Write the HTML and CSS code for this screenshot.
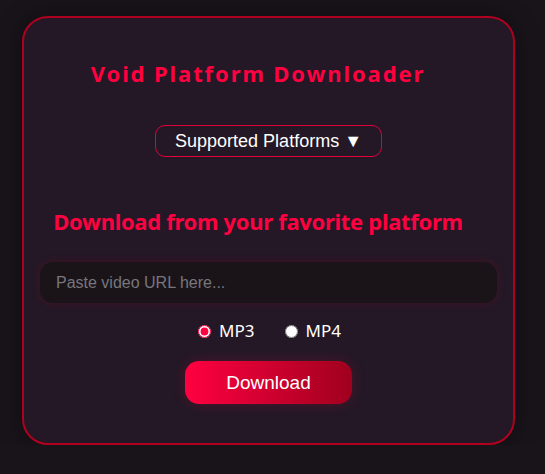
FILE: index.html
```html
<!DOCTYPE html>
<html lang="en">
<head>
<meta charset="utf-8">
<title>Void Platform Downloader</title>
<link rel="stylesheet" href="styles.css">
</head>
<body>
  <main class="card">
    <h1 class="title">Void Platform Downloader</h1>
    <button class="platforms-btn" type="button">Supported Platforms ▼</button>
    <h2 class="subtitle">Download from your favorite platform</h2>
    <input class="url-input" type="text" placeholder="Paste video URL here...">
    <div class="formats">
      <label class="format"><input type="radio" name="format" checked> MP3</label>
      <label class="format"><input type="radio" name="format"> MP4</label>
    </div>
    <button class="download-btn" type="button">Download</button>
  </main>
</body>
</html>
```

FILE: styles.css
```css
* { box-sizing: border-box; }

html, body {
  margin: 0;
  background: #18141a;
}

body {
  padding: 16px 30px 0 22px;
  font-family: "Liberation Sans", Arial, sans-serif;
}

.card {
  width: 493px;
  height: 429px;
  border: 2px solid #b0001f;
  border-radius: 26px;
  background: #241826;
  box-shadow: 0 0 24px rgba(0, 0, 0, 0.35);
  padding: 40px 16px 39px;
  display: flex;
  flex-direction: column;
  align-items: center;
}

.title {
  margin: 0 21px 0 0;
  font-family: "Noto Sans", sans-serif;
  font-weight: 700;
  font-size: 22px;
  line-height: 30px;
  letter-spacing: 1.9px;
  color: #ff0040;
}

.platforms-btn {
  margin-top: 37px;
  width: 227px;
  height: 32px;
  border: 1px solid #e0003a;
  border-radius: 10px;
  background: transparent;
  color: #ffffff;
  font-family: "Liberation Sans", Arial, sans-serif;
  font-size: 18px;
  padding: 0;
}

.subtitle {
  margin: 49px 21px 0 0;
  font-family: "Noto Sans", sans-serif;
  font-weight: 700;
  font-size: 22px;
  line-height: 30px;
  letter-spacing: -0.3px;
  color: #ff0040;
}

.url-input {
  margin-top: 26px;
  width: 457px;
  height: 41px;
  border: none;
  border-radius: 13px;
  background: #1a1419;
  box-shadow: 0 0 8px rgba(160, 0, 40, 0.25);
  padding: 0 16px;
  color: #ffffff;
  font-family: "Liberation Sans", Arial, sans-serif;
  font-size: 16px;
  outline: none;
}

.url-input::placeholder {
  color: #77767c;
}

.formats {
  margin-top: 18px;
  margin-left: 2px;
  display: flex;
  gap: 30px;
  height: 20px;
  align-items: center;
}

.format {
  display: flex;
  align-items: center;
  gap: 8px;
  color: #ffffff;
  font-family: "Noto Sans", sans-serif;
  font-size: 17px;
  line-height: 20px;
}

.format input {
  margin: 0;
  width: 13px;
  height: 13px;
  accent-color: #ff0040;
}

.download-btn {
  margin-top: 20px;
  width: 167px;
  height: 43px;
  border: none;
  border-radius: 14px;
  background: linear-gradient(90deg, #ff0040, #a0001e);
  box-shadow: 0 0 14px rgba(255, 0, 64, 0.18);
  color: #ffffff;
  font-family: "Liberation Sans", Arial, sans-serif;
  font-size: 19px;
  padding: 0;
}
```
